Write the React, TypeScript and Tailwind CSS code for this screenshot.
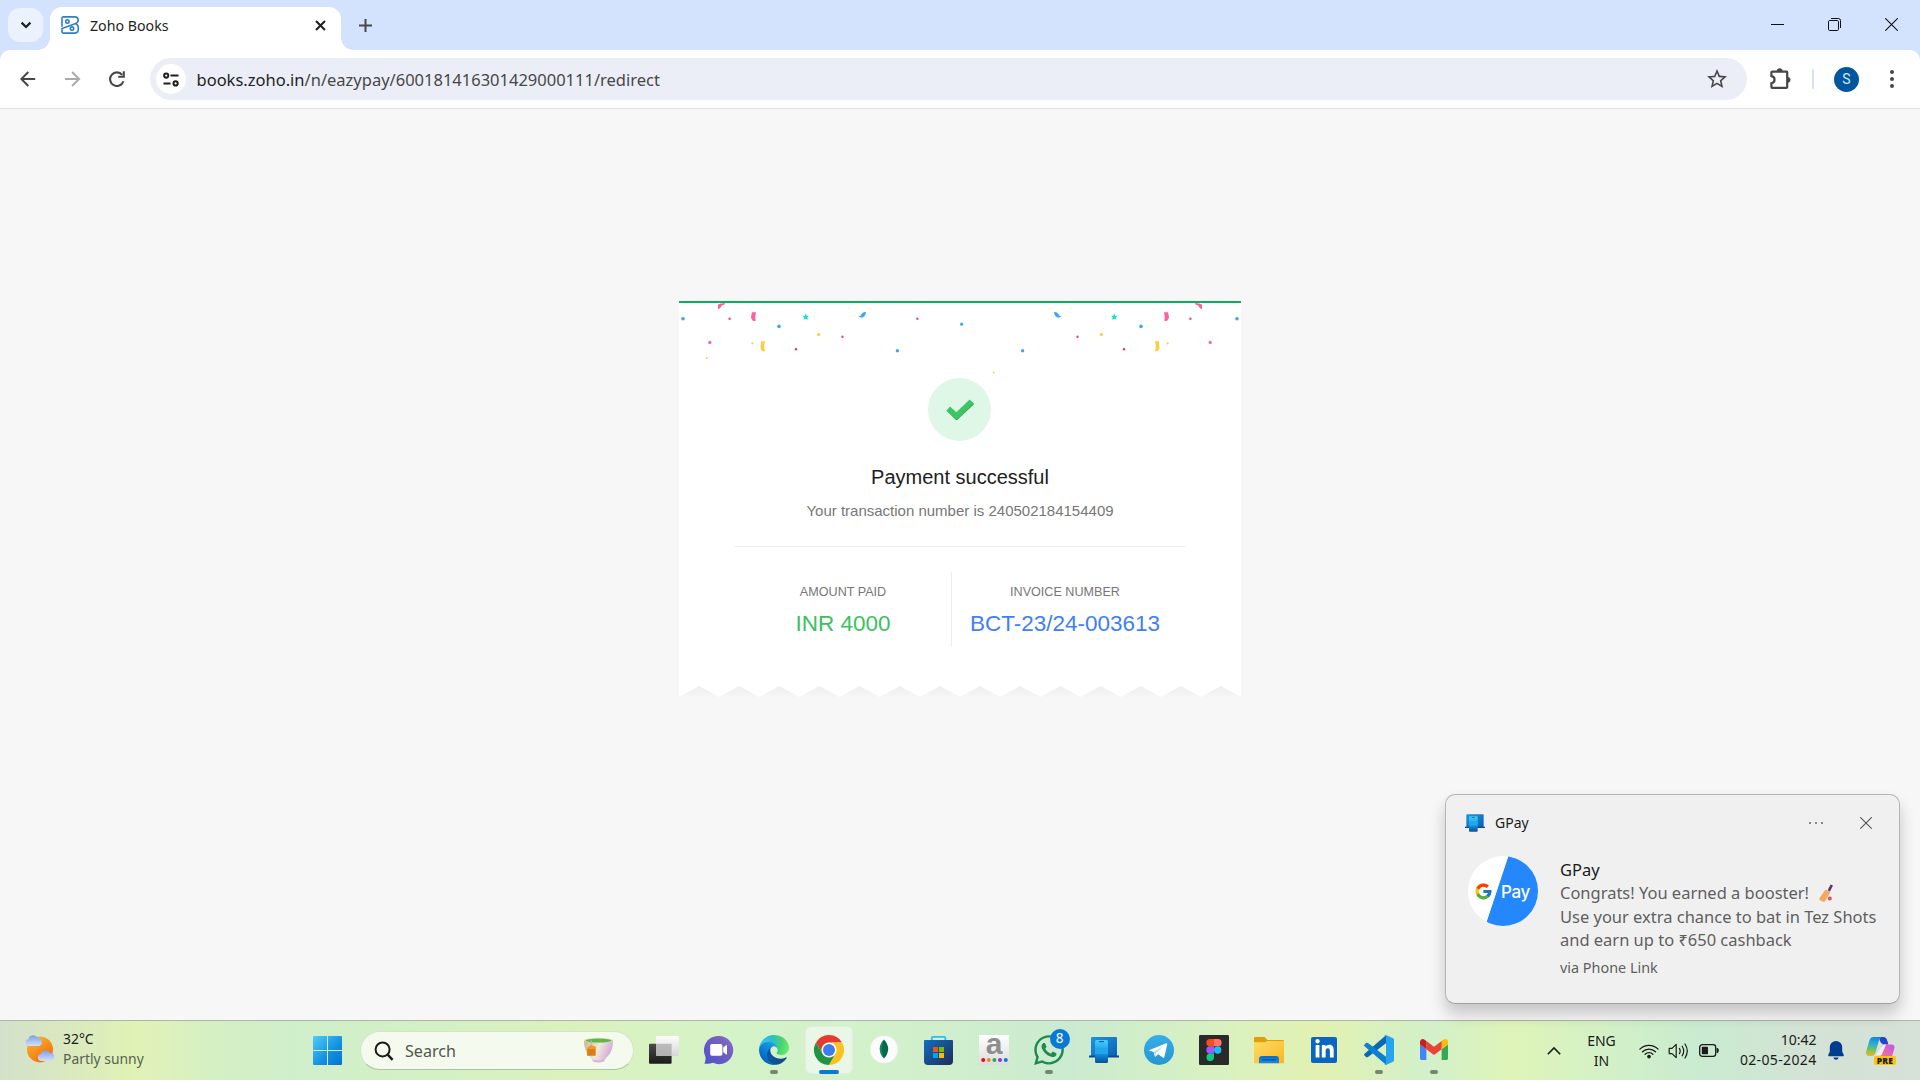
import type { ReactNode } from 'react';
import { FcGoogle } from 'react-icons/fc';
import { FaWhatsapp, FaLinkedinIn } from 'react-icons/fa';
import { MdOutlineStarBorder } from 'react-icons/md';

const SEGOE = "font-['Noto_Sans','Liberation_Sans',sans-serif]";

function BooksLogo() {
  return (
    <svg className="h-[18px] w-[18px]" viewBox="0 0 18 18" fill="none" stroke="#2f7fc9" strokeWidth="1.6">
      <path d="M1 10.8V2.2C1 1.3 1.5.9 2.3.9H13.6C16 .9 17.2 2.3 17.2 4.2C17.2 6 16.2 7 14 7.8L1 12.6V15.8C1 16.7 1.5 17.1 2.3 17.1H13.4C16 17.1 17.3 15.6 17.3 13.3V11.4C17.3 9.8 16.3 8.6 15 8" />
      <circle cx="6.4" cy="5.4" r="1.7" />
      <circle cx="11" cy="12.6" r="1.7" />
    </svg>
  );
}

function TabStrip() {
  return (
    <div className="flex h-[50px] items-start bg-[#d3e3fd]">
      <div className="mt-2 ml-2 flex h-[34px] w-[35px] items-center justify-center rounded-xl bg-[#ebf2fe]">
        <svg className="h-3 w-3" viewBox="0 0 12 12" fill="none" stroke="#1f1f1f" strokeWidth="2.2">
          <path d="M1.6 3.6L6 8L10.4 3.6" />
        </svg>
      </div>
      <div className="relative mt-[7px] ml-[7px] flex h-[43px] w-[291px] items-center rounded-t-[12px] bg-white pb-[7px] pl-[11px]">
        <BooksLogo />
        <span className="mt-0.5 ml-[11px] text-[14.2px] leading-5 text-[#1f1f1f]">Zoho Books</span>
        <svg className="mr-[15px] ml-auto h-[11px] w-[11px]" viewBox="0 0 11 11" stroke="#1f1f1f" strokeWidth="2">
          <path d="M1 1L10 10M10 1L1 10" />
        </svg>
        <span className="absolute bottom-0 -left-3 h-3 w-3 bg-[radial-gradient(circle_at_top_left,#d3e3fd_11.5px,#fff_12px)]" />
        <span className="absolute -right-3 bottom-0 h-3 w-3 bg-[radial-gradient(circle_at_top_right,#d3e3fd_11.5px,#fff_12px)]" />
      </div>
      <svg className="mt-[19px] ml-[18px] h-[13px] w-[13px]" viewBox="0 0 13 13" stroke="#474747" strokeWidth="2">
        <path d="M6.5 0V13M0 6.5H13" />
      </svg>
      <div className="mt-[18px] mr-[22px] ml-auto flex items-center gap-[44px]">
        <svg className="h-[13px] w-[13px]" viewBox="0 0 13 13"><rect y="6" width="13" height="1" fill="#111" /></svg>
        <svg className="h-[13px] w-[13px]" viewBox="0 0 13 13" fill="none" stroke="#111">
          <rect x=".5" y="2.5" width="10" height="10" rx="1.2" />
          <path d="M3 .5H10.5A2 2 0 0 1 12.5 2.5V10" />
        </svg>
        <svg className="h-[13px] w-[13px]" viewBox="0 0 13 13" stroke="#111" strokeWidth="1.1"><path d="M.3 .3L12.7 12.7M12.7 .3L.3 12.7" /></svg>
      </div>
    </div>
  );
}

function Toolbar() {
  return (
    <div className="bg-[#d3e3fd]">
      <div className="flex h-[59px] items-center rounded-t-[10px] border-b border-[#dfe1e5] bg-white">
        <svg className="ml-5 h-4 w-4" viewBox="0 0 16 16" fill="none" stroke="#474747" strokeWidth="2">
          <path d="M15.2 8H2M8.3 1L1.3 8L8.3 15" />
        </svg>
        <svg className="ml-[29px] h-4 w-4" viewBox="0 0 16 16" fill="none" stroke="#ababab" strokeWidth="2">
          <path d="M0 8H13.4M7.1 1L14.1 8L7.1 15" />
        </svg>
        <svg className="ml-[28px] h-4 w-4" viewBox="0 0 16 16" fill="none" stroke="#474747" strokeWidth="2.1">
          <path d="M13.2 3.9A6.8 6.8 0 1 0 14.4 10.2" />
          <path d="M14.8 .3V5.8H9.2" />
        </svg>
        <div className="ml-[25px] flex h-[42px] w-[1597px] items-center rounded-full bg-[#ebeef7] pl-[6px]">
          <div className="flex h-[30px] w-[30px] items-center justify-center rounded-full bg-white">
            <svg className="h-[15px] w-4" viewBox="0 0 16 15" fill="none" stroke="#1f1f1f" strokeWidth="2">
              <circle cx="3.2" cy="3.6" r="2.1" />
              <path d="M7.5 3.6H15.5M.5 11.4H7.5" />
              <circle cx="12.6" cy="11.4" r="2.1" />
            </svg>
          </div>
          <span className="mt-px ml-[10.5px] text-[16.5px] leading-6 text-[#474747]">
            <span className="text-[#1f1f1f]">books.zoho.in</span>/n/eazypay/600181416301429000111/redirect
          </span>
          <MdOutlineStarBorder className="mr-[18px] ml-auto text-[24px] text-[#474747]" />
        </div>
        <svg className="ml-[22px] h-[22px] w-[22px]" viewBox="0 0 22 22" fill="none">
          <path d="M3.2 3.6H17.6Q18.2 3.6 18.2 4.2V19Q18.2 19.9 17.4 19.9H3.2Q2.4 19.9 2.4 19V15.2C6.6 14.2 6.6 9 2.4 8.2V4.4Q2.4 3.6 3.2 3.6Z" stroke="#474747" strokeWidth="2.2" />
          <path d="M8 3.2A2.7 2.7 0 0 1 13.4 3.2ZM18.6 9.2A2.6 2.6 0 0 1 18.6 14.4Z" fill="#474747" stroke="#474747" strokeWidth=".6" />
        </svg>
        <span className="ml-[21px] h-5 w-0.5 rounded bg-[#d3e3fd]" />
        <span className="ml-5 flex h-[25px] w-[25px] items-center justify-center rounded-full bg-[#00579e] font-['Roboto',sans-serif] text-[14px] text-[#d5e8fb]">S</span>
        <svg className="ml-[30.5px] h-5 w-1" viewBox="0 0 4 20" fill="#474747">
          <circle cx="2" cy="3" r="2" /><circle cx="2" cy="10" r="2" /><circle cx="2" cy="17" r="2" />
        </svg>
      </div>
    </div>
  );
}

function ConfettiHalf() {
  return (
    <g>
      <path d="M39 8.4L39 3.8Q41 2 46.4 2L45.6 3.6Q42.3 4.2 41.4 6.8Z" fill="#ff5f9e" />
      <path d="M73 11.2H77L76.4 15Q76 18 77 19.6L74.6 20.2Q71.4 18 72.2 15Z" fill="#ff5f9e" />
      <path d="M82 40.6L86 40Q85 43.6 85.1 46.4L86.2 50.4L82.8 49.8Q80.6 46.6 82 43.2Z" fill="#ffcd35" />
      <path d="M179.4 15.8Q182 15.2 182.6 13Q184.4 10.6 187 11.2Q187 14.6 184.2 16.2Q181.6 17.2 179.4 15.8Z" fill="#3fa5f5" />
      <path d="M126.7 12.6L127.7 14.7L129.8 14.9L128.3 16.4L129 18.8L126.7 17.7L124.4 18.8L125.1 16.4L123.6 14.9L125.7 14.7Z" fill="#12e0d2" />
      <circle cx="4" cy="17.7" r="1.8" fill="#3fa5f5" />
      <circle cx="100" cy="25.4" r="1.8" fill="#3fa5f5" />
      <circle cx="218.4" cy="49.8" r="1.7" fill="#3fa5f5" />
      <circle cx="50.6" cy="17.7" r="1.2" fill="#f0457d" />
      <circle cx="163.5" cy="35.8" r="1.2" fill="#f0457d" />
      <circle cx="117" cy="48.2" r="1.2" fill="#e8326e" />
      <circle cx="30.8" cy="41.4" r="1.6" fill="#ff5f9e" />
      <circle cx="139.6" cy="33.6" r="1.6" fill="#ffcd35" />
      <circle cx="73.4" cy="42.3" r="1.1" fill="#ffcd35" />
    </g>
  );
}

function Confetti() {
  return (
    <svg className="absolute -top-0.5 left-0 h-20 w-[562px]" viewBox="0 0 562 80">
      <ConfettiHalf />
      <g transform="translate(562 0) scale(-1 1)"><ConfettiHalf /></g>
      <circle cx="238.4" cy="17.7" r="1.2" fill="#f0457d" />
      <circle cx="282.7" cy="23.2" r="1.6" fill="#3fa5f5" />
      <circle cx="27.8" cy="57" r="1" fill="#ffcd35" />
      <circle cx="314.8" cy="71.4" r="1" fill="#ffcd35" />
    </svg>
  );
}

const TEETH = Array.from({ length: 14 }, (_, i) => i * (562 / 14));

function Receipt() {
  return (
    <section className="mt-[192px] flex flex-col font-['Liberation_Sans',Arial,sans-serif]">
      <div className="relative flex h-[385px] w-[562px] flex-col items-center border-t-2 border-[#05b15b] bg-white">
        <Confetti />
        <div className="mt-[75px] mr-px flex h-[63px] w-[63px] items-center justify-center rounded-full bg-[#dff7e6]">
          <svg className="ml-px h-7 w-7" viewBox="0 0 28 28" fill="none">
            <path d="M2.6 14.4L10.6 22.2L27 6.8" stroke="#2fa552" strokeWidth="3.4" strokeLinejoin="round" />
            <path d="M2.2 12.6L10.5 20L25.6 5.4" stroke="#3cc565" strokeWidth="5.6" strokeLinejoin="round" />
          </svg>
        </div>
        <h1 className="mt-[21px] text-[20px] leading-[30px] text-[#212121]">Payment successful</h1>
        <p className="mt-2 text-[15px] leading-[22px] text-[#777]">Your transaction number is 240502184154409</p>
        <div className="mt-6 h-px w-[450px] bg-[#ededed]" />
        <div className="mt-[25px] flex h-[75px] w-[450px] text-center">
          <div className="w-[217px] border-r border-[#ededed] pt-2.5">
            <p className="text-[12.6px] leading-5 text-[#777]">AMOUNT PAID</p>
            <p className="mt-[7px] text-[22.5px] leading-[30px] text-[#3cc062]">INR 4000</p>
          </div>
          <div className="w-[226px] pt-2.5">
            <p className="text-[12.6px] leading-5 text-[#777]">INVOICE NUMBER</p>
            <p className="mt-[7px] text-[22.5px] leading-[30px] text-[#407ff5]">BCT-23/24-003613</p>
          </div>
        </div>
      </div>
      <svg className="h-[11px] w-[562px]" viewBox="0 0 562 11">
        <defs>
          <linearGradient id="tooth" x1="0" y1="0" x2="0" y2="1">
            <stop offset="0" stopColor="#eeeeee" />
            <stop offset="1" stopColor="#f6f6f6" />
          </linearGradient>
        </defs>
        <rect width="562" height="11" fill="#fff" />
        {TEETH.map((x) => (
          <path key={x} d={`M${x} 11L${x + 20.07} 0L${x + 40.14} 11Z`} fill="url(#tooth)" />
        ))}
      </svg>
    </section>
  );
}

function PhoneLink({ className }: { className: string }) {
  return (
    <svg className={className} viewBox="0 0 30 28">
      <defs>
        <linearGradient id="plScreen" x1="0" y1="0" x2="1" y2="1">
          <stop offset="0" stopColor="#1f94de" />
          <stop offset="1" stopColor="#0b5fb4" />
        </linearGradient>
        <linearGradient id="plPhone" x1="0" y1="0" x2="0" y2="1">
          <stop offset="0" stopColor="#45d0f7" />
          <stop offset=".6" stopColor="#1490df" />
          <stop offset="1" stopColor="#0b4f96" />
        </linearGradient>
      </defs>
      <rect x="2" y="1" width="26" height="20" rx="1" fill="url(#plScreen)" />
      <path d="M0 19.5H30V21.5H0Z" fill="#0a4a8f" />
      <rect x="6" y="4" width="13" height="23" rx="1.5" fill="url(#plPhone)" />
      <path d="M6 12H19V18H6Z" fill="#1ea7ea" />
      <path d="M10 5.6H15" stroke="#0d5fa8" strokeWidth="1.2" />
    </svg>
  );
}

function Toast() {
  return (
    <aside className="absolute right-[20px] bottom-[16px] h-[210px] w-[455px] rounded-[10px] border border-[#b5b5b5] border-b-[#a0a0a0] bg-[#f0f0f0] pl-[19px] shadow-[0_10px_16px_rgba(0,0,0,0.2)]">
      <div className="mt-4 flex h-6 items-center">
        <PhoneLink className="h-5 w-5" />
        <span className="ml-2.5 text-[14px] leading-5 text-[#1b1b1b]">GPay</span>
        <svg className="ml-auto h-1 w-4" viewBox="0 0 16 4" fill="#666">
          <circle cx="2" cy="2" r="1" /><circle cx="8" cy="2" r="1" /><circle cx="14" cy="2" r="1" />
        </svg>
        <svg className="mr-[27px] ml-[36px] h-3 w-3" viewBox="0 0 12 12" stroke="#555" strokeWidth="1.1">
          <path d="M.3 .3L11.7 11.7M11.7 .3L.3 11.7" />
        </svg>
      </div>
      <div className="mt-[23px] flex">
        <div className="ml-[2.5px] flex h-[70px] w-[70px] shrink-0 items-center overflow-hidden rounded-full bg-[linear-gradient(108.3deg,#fff_43%,#2487fb_43.9%)] -mt-0.5 pt-px pl-[6px]">
          <FcGoogle className="shrink-0 text-[19px]" />
          <span className="ml-[8.5px] font-['Inter',sans-serif] text-[17px] leading-5 font-medium tracking-[-0.4px] text-white">Pay</span>
        </div>
        <div className="ml-[22.5px] text-[16.48px] leading-[23.3px] text-[#5f5f5f]">
          <p className="text-[#1b1b1b]">GPay</p>
          <p className="flex items-center">
            Congrats! You earned a booster!
            <svg className="ml-[10px] h-[18px] w-[14px]" viewBox="0 0 14 18">
              <path d="M8.6 6.2L11.6 .4L14 1.6L11 7.4Z" fill="#5a3b66" />
              <path d="M6.4 5.6L11.4 8.2L6 17.2Q5 18.2 3.4 17.4L1 16.2Q-.2 15.4 .6 14Z" fill="#f5a95f" />
              <circle cx="10.8" cy="14.4" r="2" fill="#e8505b" />
            </svg>
          </p>
          <p>Use your extra chance to bat in Tez Shots</p>
          <p>and earn up to ₹650 cashback</p>
          <p className="mt-[7px] text-[14.4px] leading-5">via Phone Link</p>
        </div>
      </div>
    </aside>
  );
}

function Dock({ children, open, active }: { children: ReactNode; open?: boolean; active?: boolean }) {
  return (
    <div className="relative flex w-[55px] shrink-0 justify-center pt-[5px]">
      <div className={active ? 'flex h-12 w-12 justify-center rounded-md border border-[#dfeedd] bg-[#ebf7e6] pt-2' : 'flex h-12 w-12 justify-center pt-[9px]'}>
        {children}
      </div>
      {open && <span className="absolute top-[49px] h-1 w-2 rounded-full bg-[#77876f]" />}
      {active && <span className="absolute top-[49px] h-1 w-5 rounded-full bg-[#0a78d6]" />}
    </div>
  );
}

const ICON = 'h-[30px] w-[30px] shrink-0';

function Weather() {
  return (
    <svg className="-mt-1 h-[30px] w-[30px]" viewBox="0 0 30 30">
      <defs>
        <linearGradient id="sun" x1=".1" y1="0" x2=".8" y2="1">
          <stop offset="0" stopColor="#f9bd2e" />
          <stop offset="1" stopColor="#f0660d" />
        </linearGradient>
        <linearGradient id="cloud" x1="0" y1="0" x2="0" y2="1">
          <stop offset="0" stopColor="#7c9fe6" />
          <stop offset="1" stopColor="#d3e0fa" />
        </linearGradient>
      </defs>
      <circle cx="15" cy="15.4" r="13" fill="url(#sun)" />
      <path d="M3.6 12A3.6 3.6 0 0 1 3.4 4.9A5 5 0 0 1 12.6 3.8A4.2 4.2 0 0 1 14 12Z" fill="url(#cloud)" />
      <path d="M16 27A3.6 3.6 0 0 1 15.8 19.9A5 5 0 0 1 25 18.8A4.2 4.2 0 0 1 26.4 27Z" fill="url(#cloud)" />
    </svg>
  );
}

function Start() {
  return (
    <svg className={ICON} viewBox="0 0 30 30">
      <defs>
        <linearGradient id="win" gradientUnits="userSpaceOnUse" x1="0" y1="0" x2="29" y2="29">
          <stop offset="0" stopColor="#4fd0fb" />
          <stop offset=".6" stopColor="#1490e2" />
          <stop offset="1" stopColor="#0573d2" />
        </linearGradient>
      </defs>
      <path d="M1 1H14V15H0V2Q0 1 1 1ZM15 1H28Q29 1 29 2V15H15ZM0 16H14V30H1Q0 30 0 29ZM15 16H29V29Q29 30 28 30H15Z" fill="url(#win)" />
    </svg>
  );
}

function TeaCup() {
  return (
    <svg className="h-[27px] w-[31px]" viewBox="0 0 32 27">
      <defs>
        <linearGradient id="cup" x1="0" y1="0" x2="1" y2=".3">
          <stop offset="0" stopColor="#cdb285" />
          <stop offset=".55" stopColor="#f2ead8" />
          <stop offset="1" stopColor="#d6a8dd" />
        </linearGradient>
      </defs>
      <path d="M1 3Q1 14 6 19Q9 22 9.6 23Q9.4 25.6 16 25.6T22.4 23Q23 22 26 19Q31 14 31 3Z" fill="url(#cup)" />
      <path d="M9.6 22.6Q16 25 22.4 22.6Q22.6 26 16 26T9.6 22.6Z" fill="#dcb4e2" />
      <ellipse cx="16" cy="3" rx="15" ry="2.6" fill="#e9dfc6" />
      <ellipse cx="16" cy="3.2" rx="13.4" ry="2" fill="#5fb749" />
      <path d="M8.6 3V9" stroke="#b9b2d8" strokeWidth="1" />
      <path d="M4.4 11L8.2 8L13 10V19H4.2Z" fill="#dd7c14" />
      <path d="M8.2 8L13 10V12H4.4V11Z" fill="#ef9a2a" />
    </svg>
  );
}

function TaskView() {
  return (
    <svg className={ICON} viewBox="0 0 30 30">
      <defs>
        <linearGradient id="tvDark" x1="0" y1="0" x2="0" y2="1"><stop offset="0" stopColor="#4a4a4a" /><stop offset="1" stopColor="#1b1b1b" /></linearGradient>
        <linearGradient id="tvLight" x1="0" y1="0" x2="0" y2="1"><stop offset="0" stopColor="#fdfdfd" /><stop offset="1" stopColor="#d6d6d6" /></linearGradient>
      </defs>
      <rect x="0" y="8.7" width="22.6" height="20" rx="1" fill="url(#tvDark)" />
      <rect x="7" y="1" width="22.8" height="20" rx="1" fill="url(#tvLight)" />
      <path d="M7 8.7H22.6V21H8Q7 21 7 20Z" fill="#9a9a9a" fillOpacity=".6" />
    </svg>
  );
}

function Meet() {
  return (
    <svg className={ICON} viewBox="0 0 30 30">
      <defs><linearGradient id="chat" x1="1" y1="0" x2="0" y2="1"><stop offset="0" stopColor="#7b83e8" /><stop offset=".25" stopColor="#7a63bd" /><stop offset="1" stopColor="#4a50cf" /></linearGradient></defs>
      <path d="M14.6 1A14.1 14.1 0 1 1 9 27.8Q4.6 29.4 .4 28.6Q2 26 1.4 21.4A14.1 14.1 0 0 1 14.6 1Z" fill="url(#chat)" />
      <rect x="6.2" y="9" width="12.2" height="11.8" rx="1.8" fill="#fff" />
      <path d="M19.2 12.6L22 10.2Q23 9.6 23 10.8V18.8Q23 20 22 19.4L19.2 17Z" fill="#fff" />
    </svg>
  );
}

function Edge() {
  return (
    <svg className={ICON} viewBox="0 0 256 256">
      <defs>
        <linearGradient id="eA" gradientUnits="userSpaceOnUse" x1="63" y1="178" x2="241" y2="178"><stop offset="0" stopColor="#0c59a4" /><stop offset="1" stopColor="#114a8b" /></linearGradient>
        <linearGradient id="eB" gradientUnits="userSpaceOnUse" x1="157" y1="100" x2="46" y2="221"><stop offset="0" stopColor="#1b9de2" /><stop offset=".5" stopColor="#0f83d8" /><stop offset="1" stopColor="#0067bf" /></linearGradient>
        <radialGradient id="eC" gradientUnits="userSpaceOnUse" cx="26" cy="60" r="235"><stop offset="0" stopColor="#35c1f1" /><stop offset=".4" stopColor="#2cbcd0" /><stop offset=".75" stopColor="#4bd46b" /><stop offset="1" stopColor="#66eb6e" /></radialGradient>
      </defs>
      <g transform="translate(-4.63 -4.92)">
        <path fill="url(#eA)" d="M235.68 195.46a93.73 93.73 0 0 1-10.54 4.71 101.87 101.87 0 0 1-35.9 6.46c-47.32 0-88.54-32.55-88.54-74.32A31.48 31.48 0 0 1 117.13 105c-42.8 1.8-53.8 46.4-53.8 72.53 0 73.88 68.09 81.37 82.76 81.37 7.91 0 19.84-2.3 27-4.56l1.31-.44a128.34 128.34 0 0 0 66.6-52.8 4 4 0 0 0-5.32-5.64z" />
        <path fill="url(#eB)" d="M110.34 246.34A79.2 79.2 0 0 1 87.6 225a80.72 80.72 0 0 1 29.53-120c3.12-1.47 8.45-4.13 15.54-4a32.35 32.35 0 0 1 25.69 13 31.88 31.88 0 0 1 6.36 18.66c0-.21 24.46-79.6-80-79.6-43.9 0-80 41.66-80 78.21a130.15 130.15 0 0 0 12.11 56 128 128 0 0 0 156.38 67.11 75.55 75.55 0 0 1-62.78-8z" />
        <path fill="url(#eC)" d="M156.94 153.78c-.81 1.05-3.3 2.5-3.3 5.66 0 2.61 1.7 5.12 4.72 7.23 14.38 10 41.49 8.68 41.56 8.68a59.56 59.56 0 0 0 30.27-8.35 61.38 61.38 0 0 0 30.43-52.88c.26-22.41-8-37.31-11.34-43.91C228.09 28.76 182.35 4.92 132.61 4.92a128 128 0 0 0-128 126.2c.48-36.54 36.8-66.05 80-66.05 3.5 0 23.46.34 42 10.07 16.34 8.58 24.9 18.94 30.85 29.21 6.18 10.67 7.28 24.15 7.28 29.52s-2.74 13.33-7.8 19.91z" />
      </g>
    </svg>
  );
}

function Chrome() {
  return (
    <svg className={ICON} viewBox="0 0 48 48">
      <circle cx="24" cy="24" r="12" fill="#fff" />
      <path fill="#e33b2e" d="M24 12H44.78a23.99 23.99 0 0 0-41.56 0L13.61 30l.01 0A11.985 11.985 0 0 1 24 12Z" />
      <path fill="#fcc31e" d="M34.39 30L24 48A23.99 23.99 0 0 0 44.78 12H24l0 .01A11.985 11.985 0 0 1 34.39 30Z" />
      <path fill="#229342" d="M13.61 30L3.22 12.01A23.99 23.99 0 0 0 24 48L34.39 30l0-.01a11.985 11.985 0 0 1-20.78.01Z" />
      <circle cx="24" cy="24" r="9.6" fill="#3b7ded" />
    </svg>
  );
}

function Compass() {
  return (
    <svg className={ICON} viewBox="0 0 30 30">
      <circle cx="15" cy="14.4" r="14" fill="#fbfbfb" stroke="#dfe8dc" strokeWidth=".5" />
      <path d="M15 4.4Q23.4 13.8 15 23.6Q6.6 13.8 15 4.4Z" fill="#04694a" />
      <path d="M15 4.4Q10.6 13.8 15 23.6Q6.6 13.8 15 4.4Z" fill="#128a63" />
    </svg>
  );
}

function Store() {
  return (
    <svg className={ICON} viewBox="0 0 30 30">
      <defs><linearGradient id="bag" x1="0" y1="0" x2="1" y2="1"><stop offset="0" stopColor="#0f6fc0" /><stop offset="1" stopColor="#202c58" /></linearGradient></defs>
      <path d="M7.8 6V3Q7.8 1.8 9 1.8H20.2Q21.4 1.8 21.4 3V6" fill="none" stroke="#2fbcf3" strokeWidth="1.8" />
      <path d="M0 5.6Q0 5 .7 5H28.3Q29 5 29 5.6V26Q29 30 25 30H4Q0 30 0 26Z" fill="url(#bag)" />
      <rect x="9" y="12" width="5" height="5" fill="#f25022" />
      <rect x="15" y="12" width="5" height="5" fill="#7fba00" />
      <rect x="9" y="18" width="5" height="5" fill="#00a4ef" />
      <rect x="15" y="18" width="5" height="5" fill="#ffb900" />
    </svg>
  );
}

function Alexa() {
  return (
    <div className="flex h-[30px] w-[30px] shrink-0 flex-col items-center bg-linear-to-b from-white to-[#dcdcdc]">
      <span className="-mt-[4.5px] h-[26px] font-['Liberation_Sans',sans-serif] text-[30px] leading-[26px] font-bold text-[#8d8d8d]">a</span>
      <svg className="mt-[1px] h-1 w-[27px]" viewBox="0 0 27 4">
        <circle cx="2.2" cy="2" r="2" fill="#e40d13" /><circle cx="7.8" cy="2" r="2" fill="#f2891c" /><circle cx="13.4" cy="2" r="2" fill="#1fae55" /><circle cx="19" cy="2" r="2" fill="#8939cf" /><circle cx="24.8" cy="2" r="2" fill="#0b7bd8" />
      </svg>
    </div>
  );
}

function Telegram() {
  return (
    <svg className={ICON} viewBox="0 0 30 30">
      <defs><linearGradient id="tg" x1="0" y1="0" x2="0" y2="1"><stop offset="0" stopColor="#38aee8" /><stop offset="1" stopColor="#2596d1" /></linearGradient></defs>
      <circle cx="15" cy="15" r="15" fill="url(#tg)" />
      <path d="M5 15.2L22.2 8.3Q23.4 8 23.2 9.4L20.4 22Q20 23.4 18.8 22.6L14 19.2L11.6 21.6Q11 22 10.8 21.2L9.6 16.9L5 15.6Z" fill="#fff" />
      <path d="M9.6 16.9L19.4 10.9L12 17.9L11.4 21.4Z" fill="#b9dcf0" />
    </svg>
  );
}

function Figma() {
  return (
    <svg className={ICON} viewBox="0 0 30 30">
      <rect width="30" height="30" rx="1.2" fill="#2a2a2a" />
      <path d="M11 4H15V11.3H11A3.65 3.65 0 0 1 11 4Z" fill="#f24e1e" />
      <path d="M15 4H19A3.65 3.65 0 0 1 19 11.3H15Z" fill="#ff7262" />
      <path d="M11 11.3H15V18.6H11A3.65 3.65 0 0 1 11 11.3Z" fill="#a259ff" />
      <circle cx="18.7" cy="15" r="3.65" fill="#1abcfe" />
      <path d="M11 18.6H15V22.3A3.75 3.75 0 1 1 11 18.6Z" fill="#0acf83" />
    </svg>
  );
}

function Explorer() {
  return (
    <svg className={ICON} viewBox="0 0 30 30">
      <defs>
        <linearGradient id="folder" x1="0" y1="0" x2="1" y2="1"><stop offset="0" stopColor="#ffdc6b" /><stop offset="1" stopColor="#fbb61c" /></linearGradient>
        <linearGradient id="tray" x1="0" y1="0" x2="0" y2="1"><stop offset="0" stopColor="#0d6fc6" /><stop offset="1" stopColor="#1a8be0" /></linearGradient>
      </defs>
      <path d="M0 3Q0 2 1 2H10.6L13.4 5H29Q30 5 30 6V10H0Z" fill="#e0a106" />
      <path d="M0 7.2H11L13.4 6H29.2Q30 6 30 6.8V28.2H0Z" fill="url(#folder)" />
      <path d="M5 28.2V24Q5 21 8 21H22Q25 21 25 24V28.2Z" fill="url(#tray)" />
      <path d="M9 24.8H21.4" stroke="#0a4f96" strokeWidth="1.2" strokeLinecap="round" />
    </svg>
  );
}

function Code() {
  return (
    <svg className={ICON} viewBox="0 0 30 30">
      <path d="M22 .2V8.2L4 21.9Q3 22.6 2 21.9L.5 20.5Q-.3 19.6 .5 18.8Z" fill="#0a69b4" />
      <path d="M22 29.8V21.8L4 8.1Q3 7.4 2 8.1L.5 9.5Q-.3 10.4 .5 11.2Z" fill="#0d80cf" />
      <path d="M22 0L29 3.2Q30 3.7 30 4.6V25.4Q30 26.3 29 26.8L22 30Q20.8 30 20.4 29Q22 29.4 22 27.6V2.4Q22 .6 20.4 1Q20.8 0 22 0Z" fill="#27a4ef" />
    </svg>
  );
}

function Gmail() {
  return (
    <svg className="mt-[4px] h-[21.2px] w-[28px] shrink-0" viewBox="52 42 88 66">
      <path fill="#4285f4" d="M58 108h14V74L52 59v43c0 3.32 2.69 6 6 6" />
      <path fill="#34a853" d="M120 108h14c3.32 0 6-2.69 6-6V59l-20 15" />
      <path fill="#fbbc04" d="M120 48v26l20-15v-8c0-7.42-8.47-11.65-14.4-7.2" />
      <path fill="#ea4335" d="M72 74V48l24 18 24-18v26L96 92" />
      <path fill="#c5221f" d="M52 51v8l20 15V48l-5.6-4.2c-5.94-4.45-14.4-.22-14.4 7.2" />
    </svg>
  );
}

function Tray() {
  return (
    <div className="ml-auto flex items-center pr-[24px] text-[#1b1b1b]">
      <svg className="h-2.5 w-[14px]" viewBox="0 0 14 10" fill="none" stroke="#1b1b1b" strokeWidth="1.6"><path d="M.8 8.2L7 2L13.2 8.2" /></svg>
      <div className="ml-[11px] w-[60px] text-center text-[14px] leading-5">
        <p>ENG</p>
        <p>IN</p>
      </div>
      <svg className="ml-[7px] h-4 w-5" viewBox="0 0 20 16" fill="none" stroke="#1b1b1b" strokeWidth="1.3" strokeLinecap="round">
        <path d="M.9 6.1A12.9 12.9 0 0 1 19.1 6.1M3.5 8.8A9.2 9.2 0 0 1 16.5 8.8M6.1 11.3A5.5 5.5 0 0 1 13.9 11.3" />
        <circle cx="10" cy="13.6" r="1.2" fill="#1b1b1b" />
      </svg>
      <svg className="ml-[9px] h-[18px] w-[22px]" viewBox="0 0 22 18" fill="none" stroke="#1b1b1b" strokeWidth="1.2" strokeLinecap="round" strokeLinejoin="round">
        <path d="M1.2 6.4H4L8.2 2.4V15.6L4 11.6H1.2ZM11.4 6.4Q13 9 11.4 11.6M14.2 4.2Q17.2 9 14.2 13.8M17 2Q21.6 9 17 16" />
      </svg>
      <svg className="ml-[9px] h-[13px] w-5" viewBox="0 0 20 13">
        <rect x=".7" y=".7" width="16" height="11.6" rx="2.6" fill="none" stroke="#1b1b1b" strokeWidth="1.3" />
        <path d="M17.6 4H18.6Q19.8 4.6 19.8 6.5T18.6 9H17.6Z" fill="#1b1b1b" />
        <rect x="2.8" y="2.8" width="6.2" height="7.4" rx=".8" fill="#1b1b1b" />
      </svg>
      <div className="mb-0.5 ml-[18px] w-20 text-right text-[14px] leading-5">
        <p>10:42</p>
        <p className="tracking-[0.35px]">02-05-2024</p>
      </div>
      <svg className="ml-[11px] h-[19px] w-4" viewBox="0 0 16 19" fill="#003e92">
        <path d="M8 0A6.2 6.2 0 0 1 14.2 6.2V10.4L15.8 14Q16 15.2 15 15.2H1Q0 15.2 .2 14L1.8 10.4V6.2A6.2 6.2 0 0 1 8 0ZM5.4 16.4H10.6Q10 18.8 8 18.8T5.4 16.4Z" />
      </svg>
      <div className="relative ml-[22.5px] h-7 w-[30px]">
        <svg className="h-7 w-[30px]" viewBox="0 0 30 28">
          <defs>
            <linearGradient id="cpL" x1=".4" y1="0" x2=".3" y2="1"><stop offset="0" stopColor="#1289e0" /><stop offset=".4" stopColor="#2fb3c8" /><stop offset=".7" stopColor="#7dc255" /><stop offset="1" stopColor="#f2b71f" /></linearGradient>
            <linearGradient id="cpR" x1="1" y1="0" x2=".2" y2="1"><stop offset="0" stopColor="#a44bf0" /><stop offset=".5" stopColor="#d763c9" /><stop offset="1" stopColor="#fb7a6a" /></linearGradient>
          </defs>
          <path d="M13 0H17.4Q20 0 20.8 2.6L22.4 7.4H25Q29.6 7.4 28.2 12L25.8 20Q24.6 23.8 21 23.8H13.4L17.2 9Z" fill="url(#cpR)" />
          <path d="M13 0H17.4Q20 0 20.8 2.6L22.2 7H18Q15 7 14 4Z" fill="#1b47d1" />
          <path d="M7.6 0H15.6Q13.6 1 12.8 4L9.2 16.4Q8.4 19 5.6 19H3.2Q-.8 18.6 .2 14.4L3.4 3.4Q4.4 0 7.6 0Z" fill="url(#cpL)" />
          <path d="M17.6 7.4H20L15.6 18H10Z" fill="#f3eef6" />
        </svg>
        <span className="absolute right-0 bottom-0 flex h-[9px] w-[22px] items-center justify-center rounded-[2px] bg-[#fdc406] font-['Open_Sans',sans-serif] text-[8.5px] leading-[9px] font-extrabold tracking-[0.3px] text-[#1b1b1b]">PRE</span>
      </div>
    </div>
  );
}

function Taskbar() {
  return (
    <footer className="flex h-[60px] border-t border-[#a9b8a0] bg-[linear-gradient(90deg,#d3e1cc_0px,#d9e8c0_60px,#e1f2b5_135px,#d6f0c3_210px,#cfeecb_290px,#d3f0c6_400px,#dbf1bd_570px,#d5f3c8_730px,#d2f0cb_900px,#cbebd1_1070px,#d8f1c2_1210px,#e2f1b2_1320px,#d2f0ca_1430px,#dff4b8_1510px,#d4f1c6_1600px,#c9ebd0_1700px,#d3e3d5_1800px,#d6e1d8_1920px)]">
      <div className="flex w-[300px] items-center pl-[25px]">
        <Weather />
        <div className="mb-[3px] ml-2 text-[13.9px] leading-5">
          <p className="text-[#1b1b1b]">32°C</p>
          <p className="text-[#566350]">Partly sunny</p>
        </div>
      </div>
      <Dock><Start /></Dock>
      <div className="mt-[10px] mr-[3px] ml-[4.5px] flex h-[39px] w-[274px] shrink-0 items-center rounded-full border border-[#d3e6c8] border-b-[#adc49e] bg-[#f4faee] pl-[13px]">
        <svg className="h-5 w-5" viewBox="0 0 20 20" fill="none" stroke="#1b1b1b" strokeWidth="2">
          <circle cx="8.6" cy="8.4" r="7" />
          <path d="M13.4 13.4L18.6 18.8" strokeWidth="2.4" />
        </svg>
        <span className="ml-[11.5px] text-[16.1px] leading-6 text-[#50574c]">Search</span>
        <span className="mr-[19px] ml-auto"><TeaCup /></span>
      </div>
      <Dock><TaskView /></Dock>
      <Dock><Meet /></Dock>
      <Dock open><Edge /></Dock>
      <Dock active><Chrome /></Dock>
      <Dock><Compass /></Dock>
      <Dock><Store /></Dock>
      <Dock><Alexa /></Dock>
      <Dock open>
        <FaWhatsapp className="-mt-[2px] shrink-0 text-[34px] text-[#1f8a50]" />
        <span className="absolute top-2 right-[7px] flex h-5 w-5 items-center justify-center rounded-full bg-[#0a78d6] text-[13.5px] leading-none text-white">8</span>
      </Dock>
      <Dock><PhoneLink className="mt-px h-7 w-[30px] shrink-0" /></Dock>
      <Dock><Telegram /></Dock>
      <Dock><Figma /></Dock>
      <Dock><Explorer /></Dock>
      <Dock>
        <div className="mt-[2px] flex h-[26px] w-[26px] items-center justify-center rounded-[2px] bg-[#0a66c2]">
          <FaLinkedinIn className="mb-0.5 text-[21px] text-white" />
        </div>
      </Dock>
      <Dock open><Code /></Dock>
      <Dock open><Gmail /></Dock>
      <Tray />
    </footer>
  );
}

export default function App() {
  return (
    <div className={`flex h-[1080px] w-[1920px] flex-col overflow-hidden bg-[#f7f7f7] ${SEGOE}`}>
      <TabStrip />
      <Toolbar />
      <main className="relative flex flex-1 items-start justify-center">
        <Receipt />
        <Toast />
      </main>
      <Taskbar />
    </div>
  );
}
